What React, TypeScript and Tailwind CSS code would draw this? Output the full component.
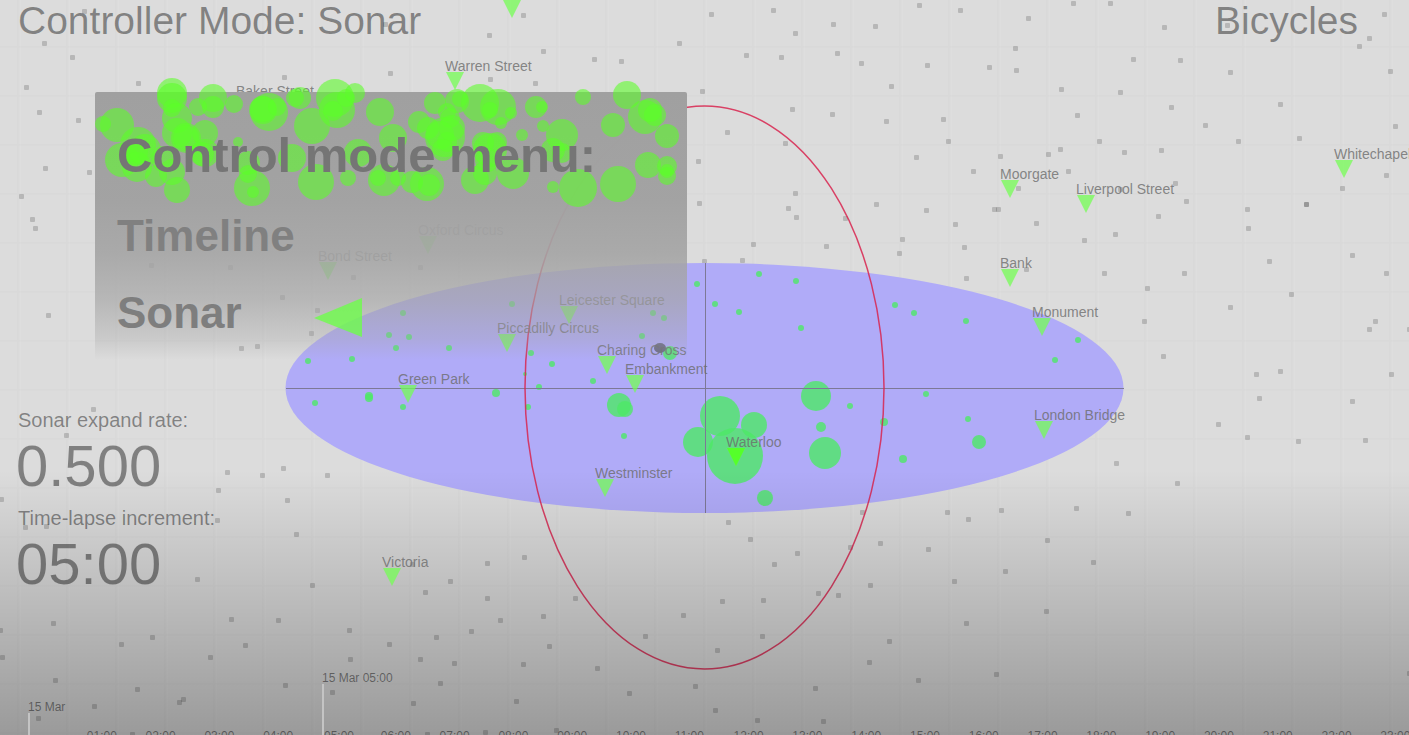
import React from "react";

const W = 1409;
const H = 735;

const DOCKS: number[][] = [
  [84, 11], [385, 24], [44, 43], [72, 57], [26, 87], [138, 83], [284, 77], [390, 73], [39, 112], [78, 120],
  [45, 168], [89, 172], [21, 196], [32, 219], [35, 228], [523, 15], [489, 35], [543, 51], [594, 59], [621, 61],
  [490, 79], [535, 83], [679, 43], [711, 14], [746, 55], [773, 10], [781, 57], [795, 33], [833, 24], [837, 53],
  [875, 26], [861, 63], [919, 5], [927, 65], [891, 86], [702, 91], [792, 109], [832, 114], [886, 121], [727, 132],
  [785, 143], [916, 157], [698, 161], [795, 193], [699, 203], [788, 208], [796, 217], [845, 218], [876, 204],
  [926, 210], [902, 239], [753, 244], [826, 246], [960, 10], [1028, 18], [1073, 3], [1110, 3], [1164, 27],
  [1015, 48], [989, 67], [1016, 70], [1133, 59], [1180, 60], [1061, 89], [1120, 92], [1171, 107], [1077, 115],
  [943, 119], [948, 141], [1099, 141], [1060, 149], [1048, 154], [1000, 156], [1124, 152], [1161, 150],
  [1205, 125], [1238, 141], [1280, 104], [1230, 72], [1384, 14], [1369, 38], [1359, 46], [1390, 71], [1227, 25],
  [1395, 126], [1299, 138], [973, 171], [1068, 171], [1018, 188], [1175, 183], [1186, 201], [994, 209],
  [998, 209], [955, 224], [1036, 223], [1158, 216], [1115, 234], [1084, 240], [1247, 209], [1248, 228],
  [1342, 188], [1386, 175], [1306, 204], [1306, 204], [1120, 189], [48, 315], [93, 409], [66, 435], [241, 348],
  [257, 346], [282, 297], [317, 310], [311, 333], [353, 277], [230, 267], [151, 265], [420, 267], [227, 472],
  [262, 475], [283, 468], [327, 475], [218, 490], [704, 261], [742, 260], [899, 253], [964, 247], [966, 278],
  [1026, 269], [1104, 273], [1184, 273], [1147, 288], [1144, 321], [1163, 356], [1230, 307], [1269, 261],
  [1291, 294], [1352, 255], [1386, 273], [1375, 321], [1369, 329], [1409, 329], [1280, 371], [1256, 374],
  [1259, 398], [1218, 424], [1352, 401], [1391, 374], [1247, 437], [1298, 441], [1365, 440], [1116, 463],
  [1177, 483], [287, 500], [217, 520], [296, 534], [25, 527], [46, 526], [197, 579], [312, 585], [450, 581],
  [425, 592], [412, 564], [53, 623], [231, 619], [278, 620], [152, 637], [121, 644], [245, 645], [210, 657],
  [2, 657], [0, 630], [55, 680], [137, 689], [183, 699], [179, 702], [94, 706], [38, 718], [285, 685],
  [332, 692], [349, 630], [350, 659], [389, 644], [420, 659], [436, 637], [454, 663], [440, 683], [413, 703],
  [132, 734], [427, 734], [1, 499], [487, 563], [524, 557], [487, 598], [575, 598], [543, 616], [500, 620],
  [471, 631], [549, 646], [523, 664], [597, 668], [516, 701], [629, 693], [485, 732], [556, 730], [645, 636],
  [683, 615], [722, 601], [728, 522], [750, 539], [797, 553], [774, 564], [763, 600], [717, 650], [762, 636],
  [695, 686], [715, 710], [757, 720], [823, 721], [815, 688], [818, 593], [838, 595], [870, 585], [850, 547],
  [862, 512], [880, 543], [928, 549], [889, 641], [869, 662], [918, 680], [947, 512], [968, 519], [1001, 510],
  [1076, 508], [1128, 513], [1047, 540], [1093, 562], [1005, 571], [954, 581], [1046, 611], [966, 623],
  [996, 674], [1409, 673],
];

const ACTIVE: number[][] = [
  [308, 361, 3], [352, 359, 3], [315, 403, 3], [369, 396, 4], [369, 398, 4], [403, 407, 3], [389, 335, 3],
  [409, 337, 3], [396, 348, 3], [449, 348, 3], [403, 313, 3], [512, 304, 3], [496, 393, 4], [531, 353, 3],
  [552, 364, 3], [525, 374, 2], [539, 387, 3], [528, 407, 3], [593, 381, 3], [624, 436, 3], [642, 336, 3],
  [653, 313, 3], [664, 318, 3], [697, 284, 3], [715, 304, 3], [739, 312, 3], [759, 274, 3], [796, 281, 3],
  [801, 328, 3], [895, 305, 3], [914, 313, 3], [926, 394, 3], [850, 406, 3], [821, 427, 5], [884, 422, 4],
  [903, 459, 4], [670, 353, 7], [619, 405, 12], [625, 409, 8], [816, 396, 15], [825, 453, 16], [720, 416, 20],
  [754, 425, 13], [698, 442, 15], [735, 456, 28], [765, 498, 8], [966, 321, 3], [1078, 340, 3], [1055, 360, 3],
  [968, 419, 3], [979, 442, 7],
];

// Bubbles of the menu banner, measured from the menu's top left corner.
const BUBBLES: number[][] = [
  [77, 1, 15], [77, 6, 15], [77, 16, 9], [82, 26, 15], [118, 6, 14], [118, 15, 11], [103, 15, 9], [139, 12, 9],
  [22, 33, 17], [8, 32, 8], [43, 53, 18], [27, 68, 17], [40, 60, 13], [42, 75, 15], [61, 84, 11], [77, 80, 13],
  [82, 98, 13], [82, 41, 15], [91, 46, 15], [91, 46, 13], [110, 41, 13], [110, 61, 14], [107, 62, 12],
  [69, 67, 13], [50, 58, 16], [168, 18, 14], [174, 20, 19], [168, 17, 13], [182, 15, 9], [205, 6, 11],
  [200, 6, 9], [217, 34, 18], [240, 6, 19], [242, 18, 18], [238, 19, 10], [251, 6, 9], [260, 1, 10],
  [285, 20, 14], [143, 50, 5], [153, 71, 12], [157, 96, 18], [153, 82, 9], [158, 100, 6], [197, 66, 14],
  [221, 90, 18], [263, 61, 14], [253, 86, 8], [298, 46, 14], [289, 88, 16], [283, 86, 8], [303, 86, 8],
  [317, 90, 11], [332, 92, 17], [334, 93, 11], [340, 11, 11], [362, 9, 12], [365, 7, 8], [352, 20, 9],
  [355, 26, 10], [324, 30, 11], [333, 36, 11], [350, 45, 20], [345, 43, 14], [352, 50, 10], [348, 58, 11],
  [357, 36, 13], [385, 11, 19], [403, 15, 18], [395, 18, 8], [416, 21, 6], [406, 31, 6], [441, 15, 11],
  [447, 15, 6], [427, 43, 6], [448, 34, 6], [467, 43, 16], [458, 58, 12], [467, 61, 10], [488, 5, 8],
  [532, 3, 14], [550, 25, 17], [555, 18, 12], [560, 23, 11], [518, 33, 12], [572, 44, 12], [553, 73, 13],
  [572, 74, 10], [572, 79, 7], [572, 84, 9], [523, 92, 18], [483, 96, 19], [458, 95, 6], [418, 81, 16],
  [380, 88, 14], [390, 81, 12], [395, 58, 17], [402, 50, 10], [388, 51, 11], [392, 68, 12],
];

const STATIONS: { name: string; x: number; y: number }[] = [
  { name: "Warren Street", x: 445, y: 72 },
  { name: "Baker Street", x: 236, y: 97 },
  { name: "Oxford Circus", x: 418, y: 236 },
  { name: "Bond Street", x: 318, y: 262 },
  { name: "Leicester Square", x: 559, y: 306 },
  { name: "Piccadilly Circus", x: 497, y: 334 },
  { name: "Charing Cross", x: 597, y: 356 },
  { name: "Embankment", x: 625, y: 375 },
  { name: "Green Park", x: 398, y: 385 },
  { name: "Waterloo", x: 726, y: 448 },
  { name: "Westminster", x: 595, y: 479 },
  { name: "Victoria", x: 382, y: 568 },
  { name: "Moorgate", x: 1000, y: 180 },
  { name: "Liverpool Street", x: 1076, y: 195 },
  { name: "Whitechapel", x: 1334, y: 160 },
  { name: "Bank", x: 1000, y: 269 },
  { name: "Monument", x: 1032, y: 318 },
  { name: "London Bridge", x: 1034, y: 421 },
];

const HOURS = Array.from({ length: 24 }, (_, h) => h);

const FLAGS: Record<number, { text: string; pole: string }> = {
  0: { text: "15 Mar", pole: "h-[30px] border-l-2 border-[#c4c4c4]" },
  5: { text: "15 Mar 05:00", pole: "h-[59px] border-l-2 border-[#c4c4c4]" },
};

function Pin() {
  return (
    <svg aria-hidden="true" viewBox="0 0 18 18" className="ml-px block size-[18px] shrink-0">
      <polygon points="0,0 18,0 9,18" fill="#72ff50" fillOpacity="0.72" />
    </svg>
  );
}

function StationMark({ name, x, y }: { name: string; x: number; y: number }) {
  return (
    <div
      className="absolute flex flex-col items-start"
      style={{ left: `${(x / W) * 100}%`, top: `${((y - 13) / H) * 100}%` }}
    >
      <span className="h-[13px] whitespace-nowrap text-sm leading-[15px] text-[#6c6c6c]/80">{name}</span>
      <Pin />
    </div>
  );
}

function CityMap() {
  return (
    <div className="absolute inset-0 overflow-hidden">
      <svg
        aria-hidden="true"
        viewBox={`0 0 ${W} ${H}`}
        preserveAspectRatio="none"
        className="absolute inset-0 block size-full"
      >
        <defs>
          <pattern id="blocks" x="17" y="46" width="49" height="49" patternUnits="userSpaceOnUse">
            <path d="M0 .5H49M.5 0V49" stroke="#000" strokeOpacity="0.012" strokeWidth="2" fill="none" />
            <path d="M3.5 0V49" stroke="#fff" strokeOpacity="0.06" fill="none" />
          </pattern>
          <linearGradient id="dusk" x1="0" y1="0" x2="0" y2="1">
            <stop offset="0" stopColor="#000" stopOpacity="0" />
            <stop offset="1" stopColor="#000" stopOpacity="0.3" />
          </linearGradient>
        </defs>
        <rect width={W} height={H} fill="url(#blocks)" />
        {DOCKS.map(([x, y], i) => (
          <rect key={i} x={x - 2} y={y - 2} width="5" height="5" rx="1" fill="#000" fillOpacity="0.17" />
        ))}
        <ellipse cx="704.5" cy="388" rx="419" ry="125" fill="#b0abf8" />
        {ACTIVE.map(([x, y, r], i) => (
          <circle key={i} cx={x} cy={y} r={r} fill="#4ee866" fillOpacity="0.8" />
        ))}
        <ellipse cx="660" cy="348" rx="6" ry="5" fill="#6c6c86" />
        <path d="M286 388.5H1124M705.5 263V513" stroke="#7d7896" fill="none" />
        <ellipse cx="704.5" cy="387.5" rx="179.5" ry="281.5" fill="none" stroke="#d8244f" strokeOpacity="0.85" strokeWidth="1.5" />
        <rect y="470" width={W} height="265" fill="url(#dusk)" />
        <polygon points="503,0 521,0 512,18" fill="#72ff50" fillOpacity="0.72" />
      </svg>
      {STATIONS.map((s) => (
        <StationMark key={s.name} {...s} />
      ))}
      <svg
        aria-hidden="true"
        viewBox={`0 0 ${W} ${H}`}
        preserveAspectRatio="none"
        className="absolute inset-0 block size-full"
      >
        <polygon points="727,448 745,448 736,466" fill="#55ff2a" />
      </svg>
    </div>
  );
}

function ModeMenu() {
  return (
    <nav
      aria-labelledby="menu-title"
      className="relative mt-[50px] ml-[95px] flex w-[592px] flex-col items-start gap-[29px] rounded-t-xs bg-[linear-gradient(to_bottom,rgba(160,160,160,1)_0%,rgba(162,162,162,0.99)_40%,rgba(164,164,164,0.9)_60%,rgba(164,164,164,0.65)_78%,rgba(164,164,164,0.32)_92%,rgba(164,164,164,0)_100%)] pt-[35px] pb-[23px] pl-[22px]"
    >
      <svg aria-hidden="true" viewBox="0 0 592 268" className="absolute top-0 left-0 block w-full overflow-visible">
        {BUBBLES.map(([x, y, r], i) => (
          <circle key={i} cx={x} cy={y} r={r} fill="#5cff28" fillOpacity="0.58" />
        ))}
      </svg>
      <h2 id="menu-title" className="relative text-[49px] leading-[56px] font-bold whitespace-nowrap text-[#757575]">
        Control mode menu:
      </h2>
      <button type="button" className="relative text-[44px] leading-[48px] font-bold text-[#808080]">
        Timeline
      </button>
      <button
        type="button"
        aria-current="true"
        className="relative flex items-end gap-[72px] text-[44px] leading-[48px] font-bold text-[#7e7e7e]"
      >
        Sonar
        <svg aria-hidden="true" viewBox="0 0 48 39" className="block h-[39px] w-12">
          <polygon points="0,20 48,0 48,39" fill="#6cff48" fillOpacity="0.78" />
        </svg>
      </button>
    </nav>
  );
}

function Readout({ label, value }: { label: string; value: string }) {
  return (
    <div className="flex flex-col gap-1.5">
      <dt className="text-xl leading-6">{label}</dt>
      <dd className="-ml-0.5 text-[58px] leading-[56px]">{value}</dd>
    </div>
  );
}

function HourScale() {
  return (
    <footer className="-mb-2 mt-auto flex items-end overflow-hidden pl-7 text-xs text-black/45">
      {HOURS.map((h) => {
        const flag = FLAGS[h];
        return (
          <div key={h} className="flex shrink-0 flex-col" style={{ width: `${(58.8 / (W - 28)) * 100}%` }}>
            {flag && <span className="leading-3 whitespace-nowrap">{flag.text}</span>}
            <div className={`flex items-end ${flag ? flag.pole : ""}`}>
              {h > 0 && <span className="leading-[13px]">{`${String(h).padStart(2, "0")}:00`}</span>}
            </div>
          </div>
        );
      })}
    </footer>
  );
}

export default function App() {
  return (
    <main className="relative flex h-screen flex-col overflow-hidden bg-[#dcdcdc] font-['Liberation_Sans',Arial,sans-serif]">
      <CityMap />
      <div className="relative flex grow flex-col">
        <header className="flex justify-between pr-[51px] pl-[18px] text-[39px] leading-[42px] text-black/42">
          <h1>Controller Mode: Sonar</h1>
          <p>Bicycles</p>
        </header>
        <ModeMenu />
        <dl className="mt-12 flex flex-col gap-3 pl-[18px] text-black/42">
          <Readout label="Sonar expand rate:" value="0.500" />
          <Readout label="Time-lapse increment:" value="05:00" />
        </dl>
        <HourScale />
      </div>
    </main>
  );
}
